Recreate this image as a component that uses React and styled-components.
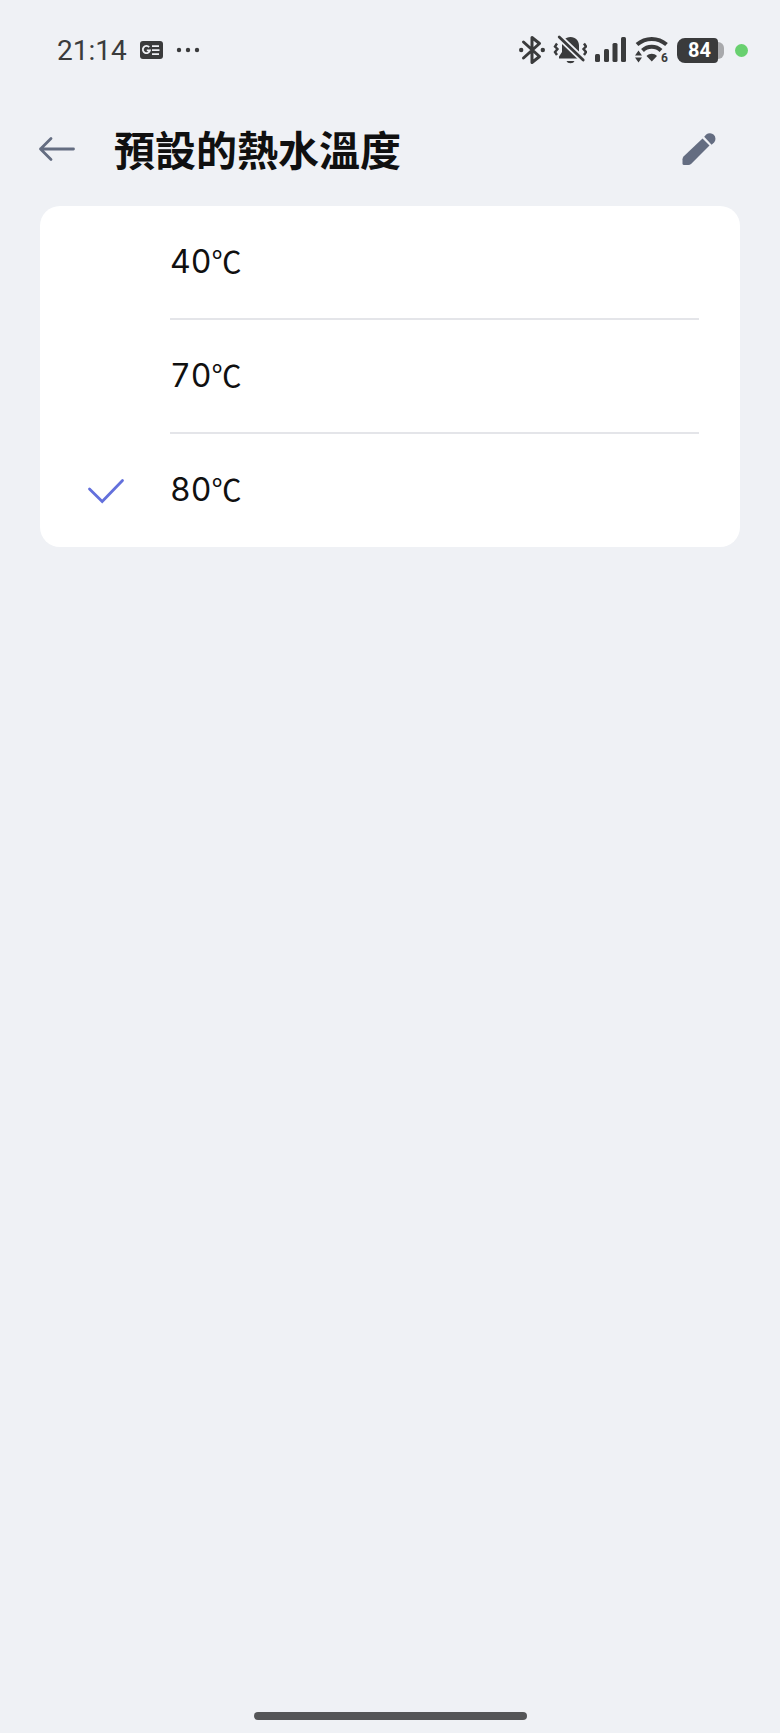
import React, { useState } from "react";
import styled, { createGlobalStyle } from "styled-components";

const GlobalStyle = createGlobalStyle`
  * {
    box-sizing: border-box;
  }
  body {
    margin: 0;
    background: #eff1f5;
    color: #101010;
    font-family: "Inter", "Noto Sans CJK TC", sans-serif;
  }
`;

const Screen = styled.div`
  display: flex;
  flex-direction: column;
  min-height: 100vh;
`;

const StatusBar = styled.div`
  display: flex;
  align-items: center;
  justify-content: space-between;
  height: 100px;
  padding: 0 32px 0 57px;
  color: #3a3b3c;
`;

const StatusGroup = styled.div`
  display: flex;
  align-items: center;
  gap: ${({ $gap }) => $gap}px;

  svg {
    display: block;
  }
`;

const Clock = styled.time`
  padding-top: 2px;
  font: 400 28px/32px "Roboto", sans-serif;
`;

const Battery = styled.div`
  display: flex;
  align-items: center;
`;

const BatteryBody = styled.span`
  width: 41px;
  height: 25px;
  padding-left: 4px;
  border-radius: 8px 4px 4px 8px;
  background: #3a3b3c;
  color: #fff;
  font: 700 20px/25px "Roboto", sans-serif;
  text-align: center;
`;

const BatteryTip = styled.span`
  width: 6px;
  height: 17px;
  border-radius: 0 6px 6px 0;
  background: #a8a9ac;
`;

const PrivacyDot = styled.span`
  width: 13px;
  height: 13px;
  margin-left: 3px;
  border-radius: 50%;
  background: #68d06f;
`;

const Header = styled.header`
  display: flex;
  align-items: center;
  height: 98px;
  padding: 0 56px 0 32px;
`;

const Title = styled.h1`
  flex: 1;
  margin: 0 0 0 32px;
  padding-bottom: 2px;
  font: 700 41px/60px "Noto Sans CJK TC", sans-serif;
`;

const IconButton = styled.button`
  display: grid;
  place-items: center;
  width: 50px;
  height: 50px;
  padding: 0;
  border: 0;
  background: none;
  color: #646d81;
  cursor: pointer;
`;

const Card = styled.fieldset`
  min-width: 0;
  margin: 8px 40px 0;
  padding: 0;
  border: 0;
  border-radius: 20px;
  background: #fff;
`;

const Row = styled.label`
  display: flex;
  align-items: center;
  padding: 0 41px 0 44px;
  cursor: pointer;
`;

const CheckSlot = styled.span`
  display: grid;
  place-items: center;
  width: 44px;
  height: 44px;
  margin-right: 42px;

  > * {
    grid-area: 1 / 1;
  }
`;

const Radio = styled.input`
  width: 44px;
  height: 44px;
  margin: 0;
  appearance: none;
  cursor: pointer;
`;

const RowText = styled.span`
  flex: 1;
  height: 113px;
  font-size: 32px;
  font-variant-numeric: tabular-nums;
  line-height: 112px;

  ${Row}:not(:last-child) & {
    height: 114px;
    border-bottom: 2px solid #e4e5e9;
  }
`;

const Unit = styled.span`
  font-family: "Noto Sans CJK TC", sans-serif;
  font-size: 30px;
  line-height: 1;
`;

const HomeArea = styled.div`
  display: flex;
  justify-content: center;
  margin-top: auto;
  padding: 12px 0 13px;
`;

const HomeHandle = styled.span`
  width: 35%;
  height: 8px;
  border-radius: 4px;
  background: #545557;
`;

const NewsIcon = () => (
  <svg width="23" height="18" viewBox="0 0 23 18" fill="none">
    <rect width="23" height="18" rx="3" fill="currentColor" />
    <path d="M9.200 6.200A3.600 3.600 0 1 0 10 9.300H6.800M12 5.200h7M12 9.200h7.500M12 13.200h7" stroke="#eff1f5" strokeWidth="1.800" />
  </svg>
);

const MoreIcon = () => (
  <svg width="24" height="6" viewBox="0 0 24 6" fill="currentColor">
    <circle cx="3" cy="3" r="2.200" />
    <circle cx="12" cy="3" r="2.200" />
    <circle cx="21" cy="3" r="2.200" />
  </svg>
);

const BluetoothIcon = () => (
  <svg width="26" height="30" viewBox="0 0 26 30" fill="none" stroke="currentColor">
    <path d="M4.500 7 20.500 21.500 13 27.500V2.500l7.500 6L4.500 23" strokeWidth="3" strokeLinejoin="round" strokeLinecap="round" />
    <circle cx="2.200" cy="15" r="2.200" fill="currentColor" stroke="none" />
    <circle cx="23.800" cy="15" r="2.200" fill="currentColor" stroke="none" />
  </svg>
);

const MutedIcon = () => (
  <svg width="34" height="30" viewBox="0 0 34 30" fill="none">
    <path
      d="M17.500 2c5.200 0 8.500 3.800 8.500 8.500v6.500l3 4.500v2H6v-2l3-4.500v-6.500C9 5.800 12.300 2 17.500 2zM13.500 26h8a4.100 3 0 0 1-8 0z"
      fill="currentColor"
    />
    <path d="m5 .8 27 26" stroke="#eff1f5" strokeWidth="6.400" />
    <path d="m6.200 2 24 23.100" stroke="currentColor" strokeWidth="2.800" strokeLinecap="round" />
    <path
      d="m4 8.500-2 3L4.500 14 2 17l2 3M31 8.500l2 3-2.500 2.500 2.500 3-2 3"
      stroke="currentColor"
      strokeWidth="2.400"
    />
  </svg>
);

const SignalIcon = () => (
  <svg width="32" height="26" viewBox="0 0 32 26" fill="currentColor">
    <rect x="0" y="17" width="5" height="8" rx="1.500" />
    <rect x="9" y="12" width="5" height="13" rx="1.500" />
    <rect x="17.500" y="6" width="5" height="19" rx="1.500" />
    <rect x="26" y="0" width="5" height="25" rx="1.500" />
  </svg>
);

const WifiIcon = () => (
  <svg width="34" height="30" viewBox="1 -2 34 30" fill="none" stroke="currentColor" strokeWidth="4">
    <path d="M3 7.500c8.500-7.500 21-7.500 29.500 0M8.500 13.500c5-5 13.500-5 18.500 0" />
    <path d="M12.500 19c3-3 7.500-3 10.500 0l-5.200 5.500z" fill="currentColor" stroke="none" />
    <path d="m4.500 13.500 3.500 5H1zM4.500 25.500 1 20.500h7z" fill="currentColor" stroke="none" />
    <text x="27" y="25" fill="currentColor" stroke="none" fontFamily="Roboto" fontSize="12" fontWeight="700">
      6
    </text>
  </svg>
);

const BackIcon = () => (
  <svg width="38" height="26" viewBox="0 0 38 26" fill="none" stroke="currentColor" strokeWidth="2.800" strokeLinecap="round">
    <path d="M2.500 13H35.500M13 2.500 2.500 13 13 23.500" strokeLinejoin="round" />
  </svg>
);

const EditIcon = () => (
  <svg width="36" height="36" viewBox="0 0 36 36" fill="currentColor">
    <path d="m21.500 7.500 7 7L10.300 32.700q-1.300 1.300-3 1.300H3q-1.500 0-1.500-1.500v-4.300q0-1.700 1.300-3z" />
    <path d="m23.200 5.800 2-2.200a5.600 5.600 0 0 1 7.900 7.900l-2.500 2.300z" />
  </svg>
);

const CheckIcon = () => (
  <svg width="38" height="26" viewBox="0 0 38 26" fill="none" stroke="#6370dc" strokeWidth="2.800">
    <path d="m2.500 11 12.700 12.500L35.500 2.500" strokeLinecap="round" />
  </svg>
);

const temperatures = [40, 70, 80];

const App = () => {
  const [selected, setSelected] = useState(80);

  return (
    <Screen>
      <GlobalStyle />
      <StatusBar>
        <StatusGroup $gap={13}>
          <Clock>21:14</Clock>
          <NewsIcon />
          <MoreIcon />
        </StatusGroup>
        <StatusGroup $gap={8}>
          <BluetoothIcon />
          <MutedIcon />
          <SignalIcon />
          <WifiIcon />
          <Battery>
            <BatteryBody>84</BatteryBody>
            <BatteryTip />
          </Battery>
          <PrivacyDot />
        </StatusGroup>
      </StatusBar>
      <Header>
        <IconButton type="button" aria-label="返回">
          <BackIcon />
        </IconButton>
        <Title>預設的熱水溫度</Title>
        <IconButton type="button" aria-label="編輯">
          <EditIcon />
        </IconButton>
      </Header>
      <Card aria-label="預設的熱水溫度">
        {temperatures.map((value) => (
          <Row key={value}>
            <CheckSlot>
              {selected === value && <CheckIcon />}
              <Radio
                type="radio"
                name="temperature"
                value={value}
                checked={selected === value}
                onChange={() => setSelected(value)}
              />
            </CheckSlot>
            <RowText>
              {value}
              <Unit>℃</Unit>
            </RowText>
          </Row>
        ))}
      </Card>
      <HomeArea>
        <HomeHandle />
      </HomeArea>
    </Screen>
  );
};

export default App;
